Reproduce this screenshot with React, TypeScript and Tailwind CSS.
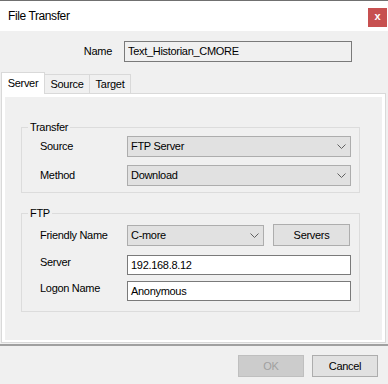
import React from "react";

function Chevron() {
  return (
    <svg width="9" height="5" viewBox="0 0 9 5" className="shrink-0">
      <polyline points="0.5,0.5 4.5,4.5 8.5,0.5" fill="none" stroke="#606060" strokeWidth="1" />
    </svg>
  );
}

function Select({ value, w }: { value: string; w: string }) {
  return (
    <div
      className={`${w} h-[21px] bg-[#e1e1e1] border border-[#adadad] flex items-center justify-between pl-[3px] pr-[4px]`}
    >
      <span>{value}</span>
      <Chevron />
    </div>
  );
}

function TextBox({ value, w, h }: { value: string; w: string; h: string }) {
  return (
    <div className={`${w} ${h} bg-white border border-[#7a7a7a] flex items-center pl-[3px]`}>
      <span>{value}</span>
    </div>
  );
}

export default function App() {
  return (
    <div className="w-[388px] h-[384px] bg-[#f0f0f0] flex flex-col overflow-hidden text-[11px] tracking-[-0.3px] text-black font-['Liberation_Sans',Arial,sans-serif]">
      <div className="h-[1px] bg-[#707070]" />
      {/* Title bar */}
      <div className="h-[30px] bg-white flex items-start justify-between pl-[8px] pr-[1px]">
        <span className="text-[12px] tracking-[-0.4px] leading-[30px]">File Transfer</span>
        <div className="mt-[7px] w-[19px] h-[19px] bg-[#c75050] flex items-center justify-center text-white font-bold text-[11px] leading-none tracking-normal pb-[2px]">
          x
        </div>
      </div>

      {/* Name row */}
      <div className="flex items-center pt-[10px]">
        <div className="w-[112px] text-right">Name</div>
        <div className="ml-[12px] w-[228px] h-[21px] bg-[#f0f0f0] border border-[#7a7a7a] flex items-center pl-[3px]">
          Text_Historian_CMORE
        </div>
      </div>

      {/* Tabs */}
      <div className="mt-[10px] h-[21px] flex items-end pl-[1px]">
        <div className="relative z-10 -mb-px w-[44px] h-[22px] bg-white border border-b-0 border-[#d9d9d9] flex items-center justify-center pb-[1px]">
          Server
        </div>
        <div className="w-[45px] h-[19px] bg-[#f0f0f0] border border-b-0 border-l-0 border-[#d9d9d9] flex items-center justify-center">
          Source
        </div>
        <div className="w-[41px] h-[19px] bg-[#f0f0f0] border border-b-0 border-l-0 border-[#d9d9d9] flex items-center justify-center">
          Target
        </div>
      </div>

      {/* Tab panel */}
      <div className="ml-[1px] w-[385px] h-[250px] border border-[#d9d9d9] bg-white p-[3px] pb-[2px]">
        <div className="h-full bg-[#f0f0f0] flex flex-col">
          <fieldset className="ml-[16px] mt-[23px] w-[339px] border border-[#dcdcdc] pb-[6px]">
            <legend className="ml-[6px] px-[2px] leading-[14px]">Transfer</legend>
            <div className="mt-[2px] h-[21px] flex items-center pl-[18px]">
              <div className="w-[87px]">Source</div>
              <Select value="FTP Server" w="w-[224px]" />
            </div>
            <div className="mt-[8px] h-[21px] flex items-center pl-[18px]">
              <div className="w-[87px]">Method</div>
              <Select value="Download" w="w-[224px]" />
            </div>
          </fieldset>

          <fieldset className="ml-[16px] mt-[13px] w-[339px] border border-[#dcdcdc] pb-[10px]">
            <legend className="ml-[6px] px-[2px] leading-[14px]">FTP</legend>
            <div className="mt-[4px] h-[22px] flex items-start pl-[18px]">
              <div className="w-[87px] h-[22px] flex items-center">Friendly Name</div>
              <div className="mt-[1px]">
                <Select value="C-more" w="w-[137px]" />
              </div>
              <div className="ml-[9px] w-[77px] h-[22px] bg-[#e1e1e1] border border-[#adadad] flex items-center justify-center">
                Servers
              </div>
            </div>
            <div className="mt-[9px] h-[20px] flex items-center pl-[18px]">
              <div className="w-[87px] mb-[5px]">Server</div>
              <TextBox value="192.168.8.12" w="w-[224px]" h="h-[20px]" />
            </div>
            <div className="mt-[6px] h-[20px] flex items-center pl-[18px]">
              <div className="w-[87px] mb-[5px]">Logon Name</div>
              <TextBox value="Anonymous" w="w-[224px]" h="h-[20px]" />
            </div>
          </fieldset>
        </div>
      </div>

      {/* Separator */}
      <div className="mt-[1px] h-[2px] bg-[#a0a0a0]" />

      {/* Buttons */}
      <div className="mt-[9px] flex justify-end pr-[10px] gap-[8px]">
        <div className="w-[66px] h-[22px] bg-[#cccccc] border border-[#bfbfbf] text-[#a0a0a0] flex items-center justify-center">
          OK
        </div>
        <div className="w-[66px] h-[22px] bg-[#e1e1e1] border border-[#adadad] flex items-center justify-center">
          Cancel
        </div>
      </div>
    </div>
  );
}
